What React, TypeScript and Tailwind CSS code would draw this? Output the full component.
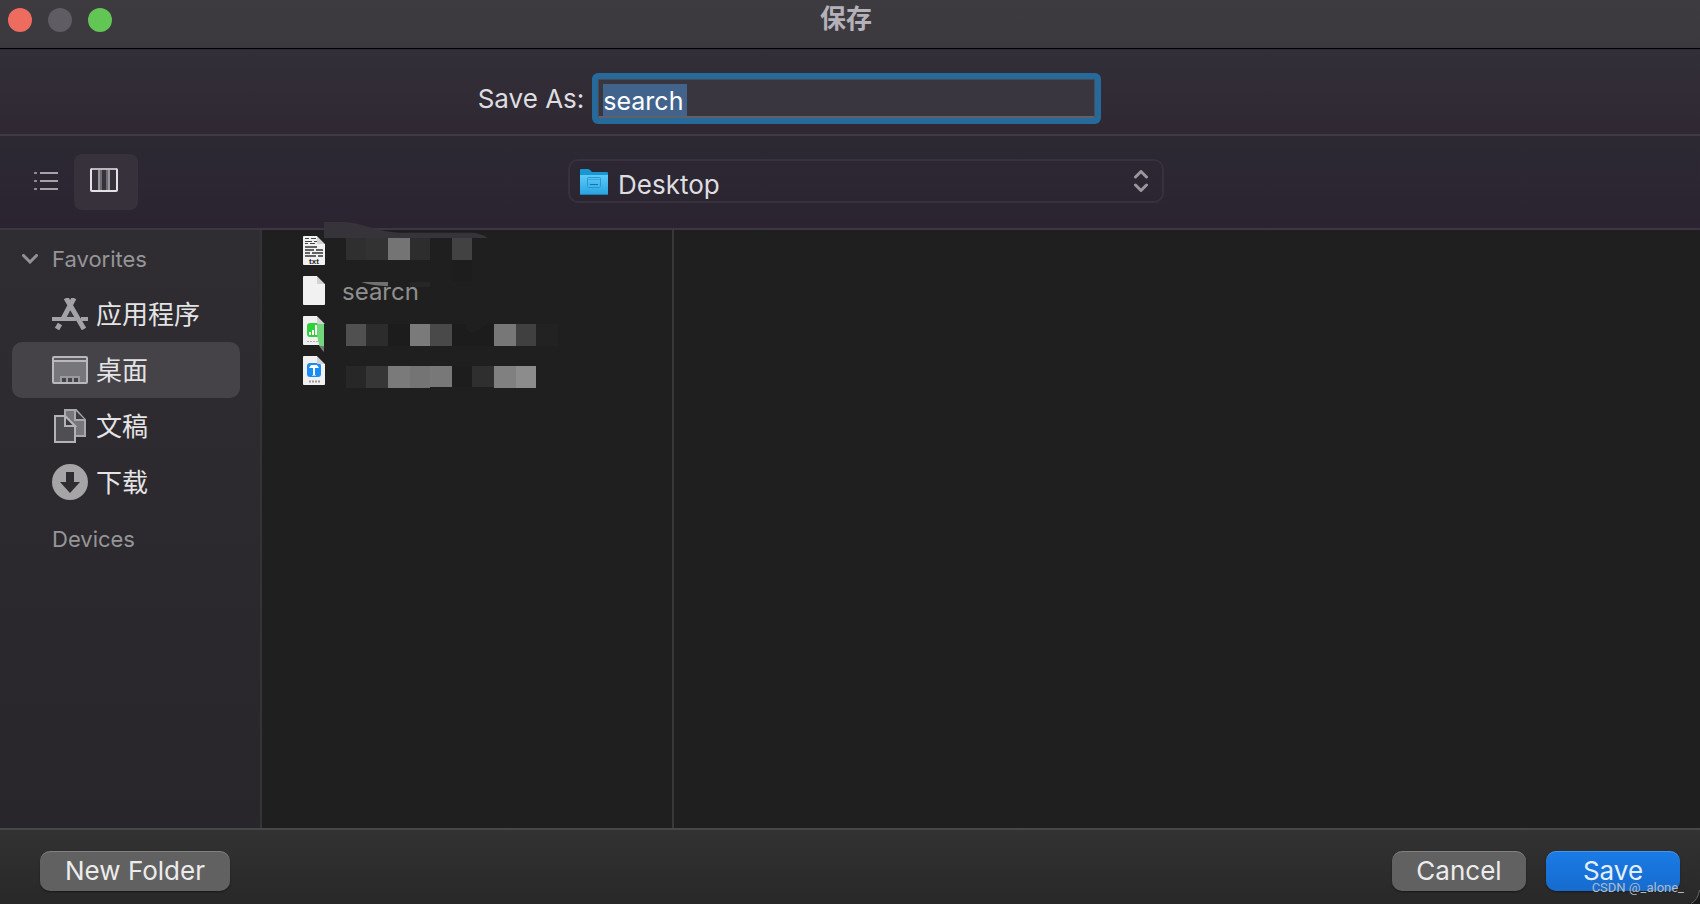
import type { ReactNode } from "react";

const latin = "font-['Inter','Noto_Sans_CJK_SC',sans-serif]";

function ListIcon() {
  return (
    <svg width="24" height="20" viewBox="0 0 24 20" fill="#a5a3a8">
      <rect x="0" y="1" width="3" height="2" opacity="0.8" />
      <rect x="6" y="1" width="18" height="2" />
      <rect x="0" y="9" width="3" height="2" opacity="0.8" />
      <rect x="6" y="9" width="18" height="2" />
      <rect x="0" y="17" width="3" height="2" opacity="0.8" />
      <rect x="6" y="17" width="18" height="2" />
    </svg>
  );
}

function ColumnsIcon() {
  return (
    <svg width="28" height="24" viewBox="0 0 28 24" fill="none">
      <rect x="1" y="1" width="26" height="22" rx="1" stroke="#e4e2e6" strokeWidth="2" />
      <path d="M2 1h24" stroke="#b9b7bc" strokeWidth="2" />
      <path d="M9 2v20M19 2v20" stroke="#98969b" strokeWidth="2" />
      <path d="M11 2v20M17 2v20" stroke="#6e6c72" strokeWidth="2" />
    </svg>
  );
}

function FolderIcon() {
  return (
    <svg width="28" height="27" viewBox="0 0 28 27" fill="none">
      <defs>
        <linearGradient id="folder" x1="0" y1="0" x2="0" y2="1">
          <stop offset="0" stopColor="#5ccbfa" />
          <stop offset="1" stopColor="#27a3e2" />
        </linearGradient>
      </defs>
      <path d="M0 1Q0 0 1 0h7q1 0 2 1l2 2h15q1 0 1 1v3H0z" fill="#1a96d2" />
      <path d="M0 6h28v19q0 1-1 1H1q-1 0-1-1z" fill="url(#folder)" />
      <path d="M0 25.500h28" stroke="#1f7fb4" />
      <rect x="7.500" y="8.500" width="13" height="10" rx="1" stroke="#2c96ce" />
      <path d="M8 10.500h12" stroke="#2c96ce" opacity="0.6" />
      <path d="M10 15.500h8" stroke="#1673a8" />
    </svg>
  );
}

function AppsIcon() {
  return (
    <svg width="36" height="32" viewBox="0 0 36 32" fill="none" stroke="#a3a2a5" strokeWidth="4">
      <path d="M0 21h24M29 21h7" />
      <path d="M22 0L11.500 20" strokeWidth="5" />
      <path d="M8 26l-3 5" strokeWidth="5" />
      <path d="M14 0l18 31" strokeWidth="5" />
      <path d="M18 13l-3 6h6z" fill="#3a393d" stroke="none" />
    </svg>
  );
}

function DesktopIcon() {
  return (
    <svg width="36" height="28" viewBox="0 0 36 28" fill="none">
      <rect x="1" y="1" width="34" height="26" rx="1" fill="#77767a" stroke="#b9b8bb" strokeWidth="2" />
      <path d="M2 3h32" stroke="#5a595d" strokeWidth="2" />
      <path d="M2 5h32" stroke="#b9b8bb" strokeWidth="2" />
      <rect x="8" y="20" width="20" height="6" fill="#9a999d" />
      <path d="M10 22h4v4h-4zM16 22h4v4h-4zM22 22h4v4h-4z" fill="#434246" />
    </svg>
  );
}

function DocumentsIcon() {
  return (
    <svg width="32" height="34" viewBox="0 0 32 34" fill="none" strokeWidth="2">
      <path d="M11 1h11l9 10v16H11z" fill="#77767a" stroke="#a9a8ab" />
      <path d="M21 1v10h10" fill="#3c3b3f" stroke="#a9a8ab" />
      <path d="M1 7h10l10 10v16H1z" fill="#4f4e52" stroke="#b3b2b5" />
      <path d="M11 7v10h10z" fill="#39383c" stroke="#b3b2b5" />
    </svg>
  );
}

function DownloadsIcon() {
  return (
    <svg width="36" height="36" viewBox="0 0 36 36">
      <circle cx="18" cy="18" r="18" fill="#a5a4a7" />
      <path d="M14 8h8v10h6L18 29 8 18h6z" fill="#2f2d32" />
    </svg>
  );
}

function Page({ children }: { children?: ReactNode }) {
  return (
    <svg width="22" height="29" viewBox="0 0 22 29" className="shrink-0">
      <path d="M1 0h13l8 8v20q0 1-1 1H1q-1 0-1-1V1q0-1 1-1z" fill="#f1f1f1" />
      {children}
      <path d="M14 0l8 8h-7q-1 0-1-1z" fill="#d2d2d2" />
      <path d="M14 0l8 8V0z" fill="#1f1f1f" />
    </svg>
  );
}

function TextFileIcon() {
  return (
    <Page>
      <path d="M2 2.500h4M8 2.500h5M2 5.500h7M11 5.500h3M2 7.500h3M7 7.500h5" stroke="#444" />
      <path d="M2 11h12M2 14h9M13 14h7M2 17h5M9 17h11M2 20h11M15 20h5" stroke="#333" strokeWidth="1.500" />
      <text x="11" y="28" textAnchor="middle" fontSize="8" fontWeight="700" fontFamily="Liberation Sans, sans-serif" fill="#222">txt</text>
    </Page>
  );
}

function NumbersFileIcon() {
  return (
    <Page>
      <rect x="4" y="7" width="15" height="14" rx="3" fill="#2fd13a" />
      <path d="M7 19v-3M10 19v-5M13 19V9" stroke="#fff" strokeWidth="2" />
      <path d="M4 25.500h12" stroke="#aaa" strokeDasharray="2 1" />
    </Page>
  );
}

function KeynoteFileIcon() {
  return (
    <Page>
      <rect x="4" y="7" width="14" height="14" rx="3" fill="#1a8cf5" />
      <path d="M6 12l2-3h6l2 3z" fill="#fff" />
      <path d="M11 11v8" stroke="#fff" strokeWidth="2" />
      <path d="M9 19.500h4" stroke="#9fd0ff" />
      <path d="M6 25.500h11" stroke="#999" strokeWidth="2" strokeDasharray="2 1" />
    </Page>
  );
}

const places = [
  { name: "应用程序", icon: <AppsIcon /> },
  { name: "桌面", icon: <DesktopIcon />, active: true },
  { name: "文稿", icon: <DocumentsIcon /> },
  { name: "下载", icon: <DownloadsIcon /> },
];

const files = [
  { name: "", icon: <TextFileIcon /> },
  { name: "searcn", icon: <Page /> },
  { name: "", icon: <NumbersFileIcon /> },
  { name: "", icon: <KeynoteFileIcon /> },
];

// x, y, width, height, fill
const blocks: [number, number, number, number, string][] = [
  [168, 68, 60, 67, "#2f2f2f"],
  [228, 68, 66, 67, "#323232"],
  [294, 68, 66, 67, "#747474"],
  [360, 68, 60, 67, "#2d2d2d"],
  [486, 68, 60, 67, "#424242"],
  [486, 135, 60, 65, "#1d1d1d"],
  [360, 201, 60, 15, "#262626"],
  [168, 327, 60, 66, "#505050"],
  [228, 327, 66, 66, "#2c2c2c"],
  [294, 327, 66, 66, "#1c1c1c"],
  [360, 327, 60, 66, "#7a7a7a"],
  [420, 327, 66, 66, "#494949"],
  [486, 327, 126, 66, "#1c1c1c"],
  [612, 327, 66, 66, "#777777"],
  [678, 327, 60, 66, "#404040"],
  [738, 327, 66, 66, "#222222"],
  [168, 453, 60, 66, "#272727"],
  [228, 453, 66, 66, "#363636"],
  [294, 453, 66, 66, "#7a7a7a"],
  [360, 453, 60, 66, "#747474"],
  [420, 453, 66, 63, "#787878"],
  [486, 453, 60, 63, "#1d1d1d"],
  [546, 453, 66, 63, "#2f2f2f"],
  [612, 453, 66, 66, "#808080"],
  [678, 453, 60, 66, "#8c8c8c"],
];

function HiddenNames() {
  return (
    <svg
      className="pointer-events-none absolute -top-[15px] left-7"
      width="290"
      height="190"
      viewBox="0 0 870 570"
      aria-hidden="true"
    >
      {blocks.map(([x, y, w, h, fill]) => (
        <rect key={`${x}-${y}`} x={x} y={y} width={w} height={h} fill={fill} />
      ))}
      <path d="M102 21h60C215 22 245 48 330 53h215q30 2 48 16H102z" fill="#36333a" />
      <path d="M213 201h81v13q-45-2-81-13z" fill="#707070" />
      <path d="M82 327h20v66h-14q-10-36-6-66z" fill="#72d77c" />
      <path d="M102 327h6v66h-6z" fill="#1f1f1f" />
      <path d="M88 393h14v18q-9-8-14-18z" fill="#777777" />
      <path d="M528 325h82c-30 2-40 28-65 28q-17 0-17-28z" fill="#1f1f1f" />
    </svg>
  );
}

function TitleBar() {
  return (
    <header className="grid h-[49px] grid-cols-[1fr_auto_1fr] items-start border-b border-black bg-gradient-to-b from-[#3d3a40] to-[#3b383e] pt-2 pr-4 pl-2">
      <div className="flex gap-4">
        <button aria-label="Close" className="size-6 rounded-full bg-[#ed6b5f]" />
        <button aria-label="Minimize" disabled className="size-6 rounded-full bg-[#5f5c63]" />
        <button aria-label="Zoom" className="size-6 rounded-full bg-[#62c655]" />
      </div>
      <h1 className="text-[26px] leading-[22px] font-bold text-[#b4b1b8]">保存</h1>
    </header>
  );
}

function NameField() {
  return (
    <div className="flex h-[87px] items-start justify-center border-t border-b-2 border-t-[#2b2932] border-b-[#3e3b45] bg-gradient-to-b from-[#322f38] to-[#2f2832] pt-[23px] pr-[121px]">
      <label htmlFor="filename" className="mr-2 text-[26px] leading-[52px] text-[#dedde0]">
        Save As:
      </label>
      <div className="flex h-[51px] w-[509px] rounded-md border-6 border-[#256a9b]">
        <div className="flex flex-1 border border-b-2 border-[#4c4a50] border-b-[#625f66] bg-[#39363f] pt-1 pl-1">
          <input
            id="filename"
            defaultValue="search"
            className="h-8 w-[84px] bg-[#41638c] pt-0.5 text-[25px] leading-8 text-white outline-none"
          />
        </div>
      </div>
    </div>
  );
}

function Toolbar() {
  return (
    <div className="flex h-[94px] items-center border-b-2 border-[#3b3743] bg-gradient-to-b from-[#2c2933] to-[#2b2430] pr-[106px]">
      <button aria-label="List view" className="mb-0.5 ml-[34px]">
        <ListIcon />
      </button>
      <button aria-label="Column view" className="ml-4 flex h-14 w-16 items-start justify-center rounded-lg bg-[#36313b] pt-3.5 pr-1">
        <ColumnsIcon />
      </button>
      <div className="mb-0.5 flex flex-1 justify-center">
        <div className="relative w-[596px]">
          <select
            aria-label="Location"
            className="block h-11 w-full appearance-none rounded-[10px] border-2 border-[#36313b] bg-transparent pt-1 pl-12 text-[26px] text-[#dedde0]"
          >
            <option>Desktop</option>
          </select>
          <div className="pointer-events-none absolute top-2.5 left-3">
            <FolderIcon />
          </div>
          <svg className="pointer-events-none absolute top-[11px] right-4" width="14" height="22" viewBox="0 0 14 22" fill="none" stroke="#99979c" strokeWidth="3" strokeLinejoin="round" strokeLinecap="round">
            <path d="M1.500 7L7 1.500 12.500 7M1.500 15L7 20.500 12.500 15" />
          </svg>
        </div>
      </div>
    </div>
  );
}

function Sidebar() {
  return (
    <nav className="w-[262px] shrink-0 border-r-2 border-[#35323c] bg-gradient-to-b from-[#2f2d32] to-[#28262b] pr-5 pl-3">
      <h2 className="flex h-14 items-center pt-0.5 text-[22px] text-[#969598]">
        <svg className="mr-3.5 ml-2.5" width="16" height="10" viewBox="0 0 16 10" fill="none" stroke="#929194" strokeWidth="3" strokeLinecap="round">
          <path d="M1.500 1.500L8 8l6.500-6.500" />
        </svg>
        Favorites
      </h2>
      <ul>
        {places.map((place) => (
          <li key={place.name}>
            <a
              href="#"
              className={`flex h-14 items-center rounded-[10px] pl-10 text-[26px] text-[#e4e4e5] ${place.active ? "bg-[#454348]" : ""}`}
            >
              <span className="mr-2 flex w-9 justify-center">{place.icon}</span>
              {place.name}
            </a>
          </li>
        ))}
      </ul>
      <h2 className="flex h-14 items-center pt-0.5 pl-10 text-[22px] text-[#969598]">Devices</h2>
    </nav>
  );
}

function FileColumn() {
  return (
    <section className="relative w-[412px] shrink-0 border-r-2 border-[#383838]">
      <ul className="pl-[41px]">
        {files.map((file, i) => (
          <li key={i} className="flex h-10 items-center text-[24px] text-[#8f8f8f]">
            {file.icon}
            <span className="ml-[17px] pt-1">{file.name}</span>
          </li>
        ))}
      </ul>
      <HiddenNames />
    </section>
  );
}

function Footer() {
  const button = "h-10 rounded-[10px] text-[26px] leading-10 shadow-[inset_0_1px_0_rgba(255,255,255,0.2),0_1px_2px_rgba(0,0,0,0.4)]";
  return (
    <footer className="relative flex h-[76px] items-start rounded-br-2xl border-t-2 border-[#474747] bg-gradient-to-b from-[#323232] to-[#282828] px-5 pt-[21px] pl-10">
      <button className={`${button} w-[190px] bg-[#616161] text-[#ececec]`}>New Folder</button>
      <button className={`${button} mr-5 ml-auto w-[134px] bg-[#616161] text-[#ececec]`}>Cancel</button>
      <button className={`${button} w-[134px] bg-gradient-to-b from-[#1a7be6] to-[#166bce] text-[#e4effc]`}>Save</button>
      <span className="absolute right-4 bottom-2 font-['Roboto',sans-serif] text-[13px] leading-4 text-[#b4bac2]">
        CSDN @_alone_
      </span>
      <svg className="absolute right-0 bottom-0" width="16" height="16" viewBox="0 0 16 16" fill="none">
        <path d="M16 0v16H6Q15 12 16 0z" fill="#1a1a1a" />
        <path d="M15.500 2Q14 12 7 15.500" stroke="#666" />
      </svg>
    </footer>
  );
}

export default function App() {
  return (
    <div className={`flex min-h-screen flex-col bg-[#1f1f1f] ${latin}`}>
      <TitleBar />
      <NameField />
      <Toolbar />
      <main className="flex flex-1">
        <Sidebar />
        <FileColumn />
      </main>
      <Footer />
    </div>
  );
}
